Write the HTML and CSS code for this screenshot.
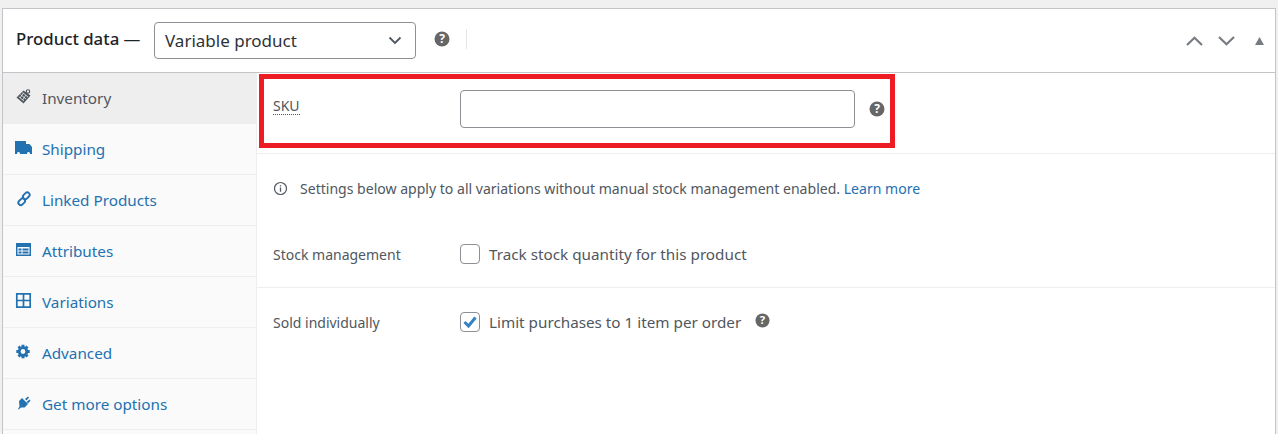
FILE: index.html
```html
<!DOCTYPE html>
<html lang="en">
<head>
   <meta charset="UTF-8">
   <meta name="viewport" content="width=device-width, initial-scale=1.0">
   <title>Product data</title>
   <link rel="stylesheet" href="styles.css">
</head>
<body>
   <div class="panel">
       <div class="panel-header">
           <h2>Product data —</h2>
           <div class="type-select">
               <span>Variable product</span>
               <svg class="select-arrow" width="14" height="9" viewBox="0 0 14 9"><path d="M1.500 1.500 7 7l5.500-5.500" fill="none" stroke="#50575e" stroke-width="1.800"/></svg>
           </div>
           <svg class="help help-header" width="16" height="16" viewBox="0 0 16 16"><circle cx="8" cy="8" r="7.500" fill="#666"/><text x="8" y="12" class="help-mark">?</text></svg>
           <div class="header-divider"></div>
           <div class="header-actions">
               <svg width="17" height="10" viewBox="0 0 17 10"><path d="M1 9 8.500 1.800 16 9" fill="none" stroke="#787c82" stroke-width="2.200"/></svg>
               <svg width="17" height="10" viewBox="0 0 17 10"><path d="M1 1 8.500 8.200 16 1" fill="none" stroke="#787c82" stroke-width="2.200"/></svg>
               <svg class="toggle" width="9" height="8" viewBox="0 0 9 8"><path d="M4.500 0 9 8H0z" fill="#787c82"/></svg>
           </div>
       </div>
       <div class="panel-body">
           <ul class="tabs">
               <li class="tab active">
                   <span class="tab-icon"><svg width="17" height="17" viewBox="0 0 17 17"><path d="M8.500 2.500 15.500 7.500 8.500 15.500 1.500 9.500z" fill="#50575e"/><path d="M5.500 6.500 11 11M3.800 8.800 9 13M7.500 4.500 13 9M8.500 5 5 10M11 7 7.500 12" stroke="#eee" stroke-width=".8"/><circle cx="13" cy="3.500" r="1.700" fill="none" stroke="#50575e" stroke-width="1.100"/></svg></span>
                   <span>Inventory</span>
               </li>
               <li class="tab">
                   <span class="tab-icon"><svg width="17" height="14" viewBox="0 0 17 14"><path d="M0 0h11v13H0zM11 3h3.500L17 6v7h-6z" fill="#2271b1"/><circle cx="3.500" cy="12.500" r="1.400" fill="#fafafa"/><circle cx="13.500" cy="12.500" r="1.400" fill="#fafafa"/></svg></span>
                   <span>Shipping</span>
               </li>
               <li class="tab">
                   <span class="tab-icon"><svg width="17" height="16" viewBox="0 0 17 16"><g fill="none" stroke="#2271b1" stroke-width="1.900"><rect x="7.600" y="2.300" width="7.400" height="4.800" rx="2.400" transform="rotate(-45 11.300 4.700)"/><rect x="3" y="8.400" width="7.400" height="4.800" rx="2.400" transform="rotate(-45 6.700 10.800)"/></g></svg></span>
                   <span>Linked Products</span>
               </li>
               <li class="tab">
                   <span class="tab-icon"><svg width="16" height="14" viewBox="0 0 16 14"><path fill-rule="evenodd" d="M1 0h15v13H1zM2.500 4v7.500h12V4zM3.500 5.500h3v2h-3zM7.500 5.500h6v2h-6zM3.500 8.500h3v2h-3zM7.500 8.500h6v2h-6z" fill="#2271b1"/></svg></span>
                   <span>Attributes</span>
               </li>
               <li class="tab">
                   <span class="tab-icon"><svg width="16" height="15" viewBox="0 0 16 15"><path d="M1.800.800h13.400v13.400H1.800zM8.500.800v13.400M1.800 7.500h13.400" fill="none" stroke="#2271b1" stroke-width="1.700"/></svg></span>
                   <span>Variations</span>
               </li>
               <li class="tab">
                   <span class="tab-icon"><svg width="16" height="15" viewBox="0 0 16 15"><circle cx="8" cy="7.500" r="3.800" fill="none" stroke="#2271b1" stroke-width="2.800"/><path d="M6.500.800h3v3h-3zM6.500 11.200h3v3h-3zM1.300 6h3v3h-3zM11.700 6h3v3h-3zM2.500 3.500l2-2 2 2-2 2zM9.500 3.500l2-2 2 2-2 2zM2.500 11.500l2-2 2 2-2 2zM9.500 11.500l2-2 2 2-2 2z" fill="#2271b1"/></svg></span>
                   <span>Advanced</span>
               </li>
               <li class="tab">
                   <span class="tab-icon"><svg width="16" height="15" viewBox="0 0 16 15"><path d="M7 3 13 9 9.500 12.500 6 12.500 3.500 14.500 3 14 4.500 11.500 4 6z" fill="#2271b1"/><path d="M10 4 13 1.500l1 1-2.500 3zM11.500 7 14.500 4.500l1 1-2.500 3z" fill="#2271b1"/></svg></span>
                   <span>Get more options</span>
               </li>
               <li class="tab"></li>
           </ul>
           <div class="panels">
               <div class="field sku-field">
                   <label class="field-label"><span class="sku-label">SKU</span></label>
                   <div class="text-input"></div>
                   <svg class="help" width="16" height="16" viewBox="0 0 16 16"><circle cx="8" cy="8" r="7.500" fill="#666"/><text x="8" y="12" class="help-mark">?</text></svg>
               </div>
               <div class="notice">
                   <svg width="15" height="15" viewBox="0 0 15 15"><circle cx="7.500" cy="7.500" r="6" fill="none" stroke="#50575e" stroke-width="1.200"/><path d="M7.500 6.500v4.200M7.500 4.200v1.300" stroke="#50575e" stroke-width="1.300"/></svg>
                   <span>Settings below apply to all variations without manual stock management enabled. <a href="#">Learn more</a></span>
               </div>
               <div class="field stock-field">
                   <label class="field-label">Stock management</label>
                   <span class="checkbox"></span>
                   <span class="check-text">Track stock quantity for this product</span>
               </div>
               <div class="field sold-field">
                   <label class="field-label">Sold individually</label>
                   <span class="checkbox">
                       <svg width="16" height="14" viewBox="0 0 16 14"><path d="M2.500 7 6.500 11 13.500 2.500" fill="none" stroke="#3582c4" stroke-width="3"/></svg>
                   </span>
                   <span class="check-text">Limit purchases to 1 item per order</span>
                   <svg class="help help-sold" width="15" height="15" viewBox="0 0 16 16"><circle cx="8" cy="8" r="7.500" fill="#666"/><text x="8" y="12" class="help-mark">?</text></svg>
               </div>
               <div class="highlight"></div>
           </div>
       </div>
   </div>
</body>
</html>
```

FILE: styles.css
```css
* {
    margin: 0;
    padding: 0;
    box-sizing: border-box;
}

html, body {
    height: 434px;
    overflow: hidden;
}

body {
    font-family: "Noto Sans", "Open Sans", sans-serif;
    font-size: 14px;
    background-color: #f0f0f1;
    color: #50575e;
    padding: 8px 2px 0 2px;
}

.panel {
    background: white;
    border: 1px solid #c3c4c7;
    border-bottom: none;
    height: 426px;
    overflow: hidden;
}

.panel-header {
    display: flex;
    align-items: center;
    height: 64px;
    padding-left: 13px;
    border-bottom: 1px solid #c3c4c7;
}

.panel-header h2 {
    width: 138px;
    font-size: 16.8px;
    font-weight: 500;
    white-space: nowrap;
    color: #1d2327;
    position: relative;
    top: -2px;
}

.type-select {
    display: flex;
    align-items: center;
    justify-content: space-between;
    width: 262px;
    height: 37px;
    padding: 0 13px 0 10px;
    border: 1px solid #8c8f94;
    border-radius: 4px;
    font-size: 17px;
    color: #2c3338;
}

.help-mark {
    font-size: 12px;
    font-weight: 700;
    fill: white;
    text-anchor: middle;
}

.help-header {
    margin-left: 18px;
    margin-top: -4px;
}

.header-divider {
    width: 1px;
    height: 20px;
    margin-left: 16px;
    margin-top: -4px;
    background-color: #e5e5e5;
}

.header-actions {
    display: flex;
    align-items: center;
    gap: 15px;
    margin-left: auto;
    margin-right: 11px;
    margin-top: 1px;
}

.toggle {
    margin-left: 5px;
}

.panel-body {
    display: flex;
    height: 361px;
}

.tabs {
    list-style: none;
    width: 254px;
    flex-shrink: 0;
    background-color: #fafafa;
    border-right: 1px solid #eee;
}

.tab {
    display: flex;
    align-items: center;
    height: 51px;
    padding-left: 12px;
    border-bottom: 1px solid #eee;
    color: #2271b1;
    font-size: 15.25px;
}

.tab-icon {
    display: flex;
    width: 27px;
    flex-shrink: 0;
    margin-top: -3px;
}

.tab.active {
    background-color: #eee;
    color: #50575e;
}

.panels {
    flex: 1;
    position: relative;
}

.field {
    display: flex;
    align-items: center;
    padding-left: 16px;
}

.field-label {
    width: 187px;
    flex-shrink: 0;
    color: #50575e;
}

.sku-field {
    height: 81px;
    padding-bottom: 8px;
    border-bottom: 1px solid #eee;
}

.sku-label {
    display: inline-block;
    position: relative;
    top: -4px;
    line-height: 16px;
    border-bottom: 1px dotted #50575e;
}

.text-input {
    width: 395px;
    height: 38px;
    border: 1px solid #8c8f94;
    border-radius: 4px;
}

.sku-field .help {
    margin-left: 14px;
}

.notice {
    display: flex;
    align-items: center;
    gap: 12px;
    height: 68px;
    padding-left: 16px;
    font-size: 14.06px;
}

.notice a {
    color: #2271b1;
    text-decoration: none;
}

.stock-field {
    height: 66px;
    padding-bottom: 2px;
    border-bottom: 1px solid #eee;
}

.stock-field .field-label {
    margin-top: 2px;
}

.sold-field {
    height: 68px;
}

.checkbox {
    display: flex;
    align-items: center;
    justify-content: center;
    width: 20px;
    height: 20px;
    border: 1px solid #8c8f94;
    border-radius: 4px;
    flex-shrink: 0;
    margin-right: 9px;
}

.check-text {
    font-size: 15.25px;
}

.help-sold {
    margin-left: 14px;
    margin-top: -3px;
}

.highlight {
    position: absolute;
    left: 2px;
    top: 1px;
    width: 636px;
    height: 74px;
    border: 5px solid #ed1c24;
}
```
